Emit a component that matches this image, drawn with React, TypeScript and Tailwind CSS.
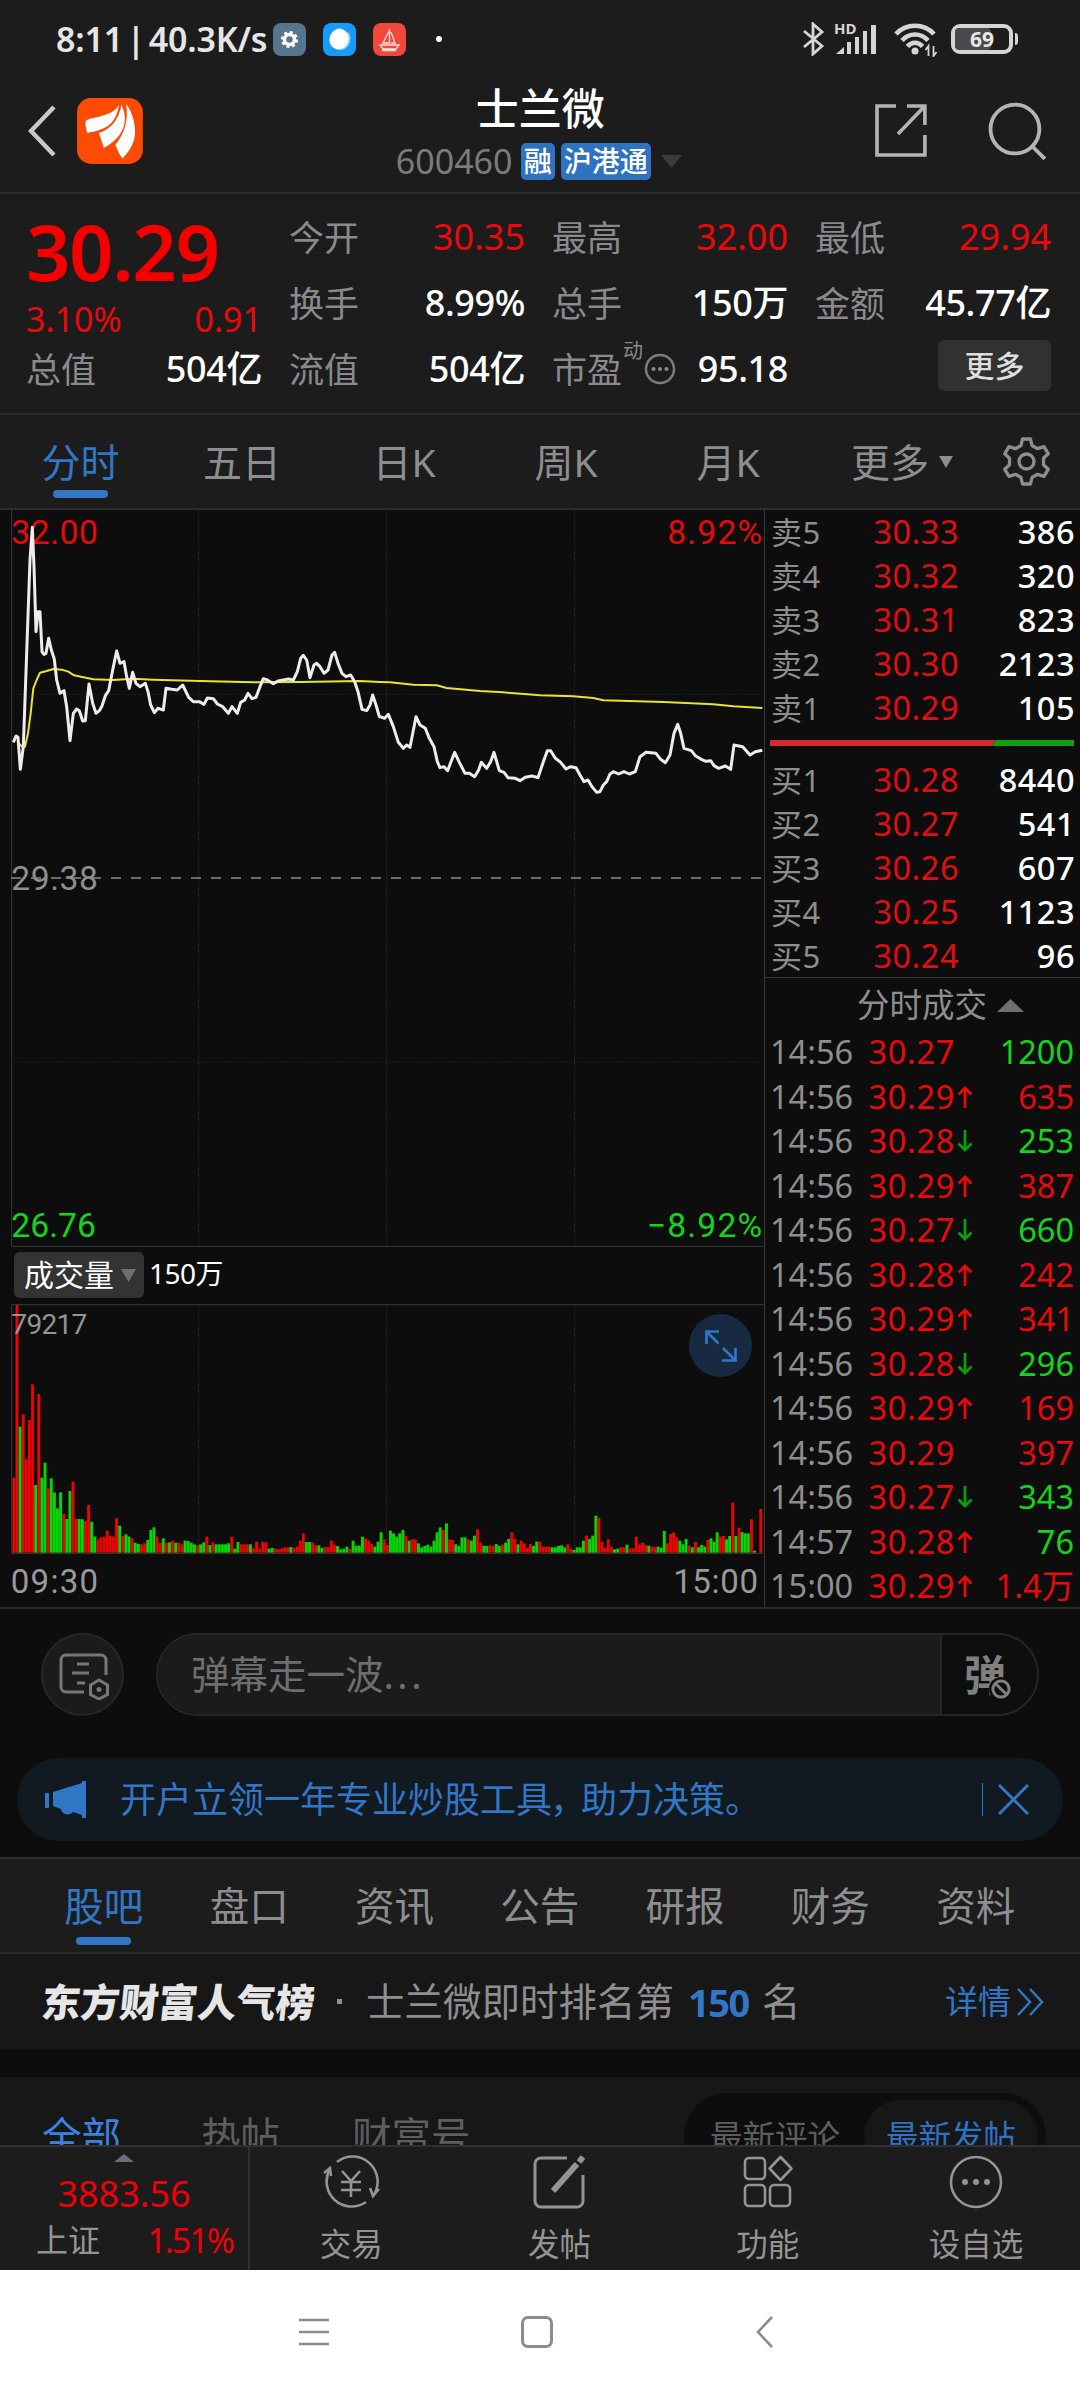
import type { ReactNode } from 'react';

type Side = 'up' | 'down' | null;

const sells = [
  ['卖5', '30.33', '386'],
  ['卖4', '30.32', '320'],
  ['卖3', '30.31', '823'],
  ['卖2', '30.30', '2123'],
  ['卖1', '30.29', '105'],
];

const buys = [
  ['买1', '30.28', '8440'],
  ['买2', '30.27', '541'],
  ['买3', '30.26', '607'],
  ['买4', '30.25', '1123'],
  ['买5', '30.24', '96'],
];

const trades: { time: string; price: string; dir: Side; vol: string; buy: boolean }[] = [
  { time: '14:56', price: '30.27', dir: null, vol: '1200', buy: false },
  { time: '14:56', price: '30.29', dir: 'up', vol: '635', buy: true },
  { time: '14:56', price: '30.28', dir: 'down', vol: '253', buy: false },
  { time: '14:56', price: '30.29', dir: 'up', vol: '387', buy: true },
  { time: '14:56', price: '30.27', dir: 'down', vol: '660', buy: false },
  { time: '14:56', price: '30.28', dir: 'up', vol: '242', buy: true },
  { time: '14:56', price: '30.29', dir: 'up', vol: '341', buy: true },
  { time: '14:56', price: '30.28', dir: 'down', vol: '296', buy: false },
  { time: '14:56', price: '30.29', dir: 'up', vol: '169', buy: true },
  { time: '14:56', price: '30.29', dir: null, vol: '397', buy: true },
  { time: '14:56', price: '30.27', dir: 'down', vol: '343', buy: false },
  { time: '14:57', price: '30.28', dir: 'up', vol: '76', buy: false },
  { time: '15:00', price: '30.29', dir: 'up', vol: '1.4万', buy: true },
];

// one entry per minute, r = up, g = down
const volumes = (
  'r225 r743 g378 r415 r280 r398 r505 g203 r476 g225 g270 r193 g223 g181 g133 g181 r116 g101 g185 r213 ' +
  'r101 g101 g100 r95 r143 g93 g48 r40 r46 r48 r66 r50 r48 r103 g81 r50 g55 g48 r43 g30 ' +
  'g26 r25 r28 g38 g68 g76 r48 r30 g43 r30 g31 r36 g30 r30 r25 g36 g35 g30 g25 r22 ' +
  'g25 g31 r48 g23 r31 g25 g25 g25 g25 g28 r48 g12 g32 r25 r25 r25 g25 r13 r33 r12 ' +
  'r33 r31 g12 g14 r12 r10 r12 r16 r16 g17 r15 r18 r36 r58 g32 g32 r30 r22 g22 g14 ' +
  'r17 r17 r36 r24 g20 g10 g12 g18 r12 g36 g21 g21 g48 r43 r36 r26 g18 g33 g61 r40 ' +
  'r23 g66 g58 g48 g58 g68 r50 g36 r40 r40 g28 g16 g20 g24 g18 g36 g61 g76 r68 g88 ' +
  'r40 r38 g25 g20 g46 g46 r40 g36 g51 r70 r30 g21 g20 r22 r20 g26 g20 r24 g30 g41 ' +
  'r61 r41 g25 r36 r28 r14 r26 g20 g33 r33 r18 r18 r18 g16 g16 g20 g22 g16 r25 r12 ' +
  'g8 g16 g16 g36 r51 g41 g51 g111 r105 r33 r14 r40 r18 g10 g12 r16 r16 g24 r13 r13 ' +
  'r48 r24 r30 r23 g21 r18 r16 g18 g15 g65 r28 r56 r61 r46 g36 g25 g41 r22 g16 r32 ' +
  'g16 g23 g18 r38 g43 g33 g61 r48 r50 g40 g50 r150 g50 r75 g62 g58 g58 r100 g6 r0 r131'
).split(' ');

const priceMorning =
  '40,727 48,708 54,712 61,808 70,740 80,460 90,180 97,82 102,200 108,395 114,335 120,335 126,455 132,463 138,460 146,415 154,450 163,478 170,540 180,580 192,572 200,620 210,722 220,640 230,627 238,632 248,663 256,662 267,552 278,610 288,640 298,632 306,618 316,587 326,572 338,510 350,453 360,490 372,485 380,530 388,565 398,517 408,550 420,560 436,550 444,575 452,615 463,638 474,625 490,630 498,565 515,568 532,570 548,555 566,592 580,605 598,605 612,613 622,594 640,596 652,612 668,620 685,640 696,620 712,640 722,607 734,600 744,580 756,596 768,592 780,560 790,536 802,540 820,551 834,543 850,540 866,537 880,540 892,515 902,475 910,466 920,480 930,533 942,495 950,490 960,500 972,520 984,510 996,465 1004,457 1014,490 1026,520 1038,530 1052,525 1064,545 1074,575 1086,628 1100,632 1110,615 1118,585 1128,615 1138,650 1140,650';
const priceAfternoon =
  '0,650 14,655 25,643 40,680 55,727 70,745 80,735 90,742 108,650 120,675 136,685 148,715 162,740 172,785 180,803 192,800 203,812 213,785 224,757 238,787 255,820 268,820 284,830 296,810 304,787 320,805 332,785 342,757 358,812 372,817 384,833 406,835 420,842 436,832 456,828 474,833 490,785 502,752 512,752 526,775 540,785 558,807 572,800 588,803 600,825 612,845 624,840 636,860 650,877 660,875 670,855 680,845 690,822 700,815 716,822 732,815 748,822 766,815 780,770 798,757 828,760 842,778 856,788 870,765 882,700 893,673 902,700 912,745 934,752 946,767 964,778 978,784 992,782 1002,797 1016,805 1036,798 1052,808 1062,735 1088,740 1110,765 1126,755 1147,751';
const avgLine =
  '55,728 66,740 75,740 84,700 92,640 100,565 110,540 120,518 140,513 160,507 185,509 205,515 222,526 250,532 280,538 340,540 400,536 460,539 600,543 760,547 900,546 1080,543 1140,546 1170,547 1240,554 1310,556 1340,564 1440,573 1510,577 1620,586 1720,589 1780,594 1810,601 1990,606 2140,613 2200,619 2287,624';

function StatusBar() {
  return (
    <div className="flex h-[78px] items-center pl-[56px] pr-[62px] text-[#e6e6e6]">
      <span className="w-[217px] whitespace-nowrap text-[34px] font-semibold tracking-[-0.2px] [word-spacing:-5px]">8:11 | 40.3K/s</span>
      <div className="flex items-center gap-[17px]">
        <svg className="size-[33px]" viewBox="0 0 33 33">
          <rect width="33" height="33" rx="8" fill="#56768f" />
          <circle cx="16.500" cy="16.500" r="5" fill="none" stroke="#fff" strokeWidth="3.500" />
          <circle cx="16.500" cy="16.500" r="7.300" fill="none" stroke="#fff" strokeWidth="2.500" strokeDasharray="3 2.730" />
        </svg>
        <svg className="size-[33px]" viewBox="0 0 33 33">
          <rect width="33" height="33" rx="8" fill="#169bfb" />
          <path d="M12 25c4 4 13 2 15-6 1-5 0-8-2-10z" fill="#8fd0ff" />
          <ellipse cx="16" cy="16" rx="9.500" ry="10.500" transform="rotate(20 16 16)" fill="#fff" />
        </svg>
        <svg className="size-[33px]" viewBox="0 0 33 33">
          <rect width="33" height="33" rx="8" fill="#f0483c" />
          <path d="M16.500 6v15M16 8l-6 12h6M18 9l4 11h-4M7 22h19l-3 4H10zM9 27.500h14" fill="none" stroke="#ffe2d8" strokeWidth="1.300" />
        </svg>
      </div>
      <span className="ml-[30px] size-[6px] rounded-full bg-white" />
      <div className="ml-auto flex items-center">
        <svg className="h-[34px] w-[24px]" viewBox="0 0 24 34" fill="none" stroke="#d5d5d5" strokeWidth="2.800">
          <path d="M3 9l18 15-9 8V2l9 8L3 25" />
        </svg>
        <svg className="ml-[10px] h-[34px] w-[43px] overflow-visible" viewBox="0 0 43 34">
          <text x="-1" y="11.500" fontSize="15" fontWeight="700" fill="#d5d5d5">HD</text>
          <g fill="#d5d5d5">
            <path d="M1 32l8-7v7z" />
            <rect x="12" y="20" width="4" height="12" />
            <rect x="20" y="15" width="4" height="17" />
            <rect x="28" y="9" width="4" height="23" />
            <rect x="36" y="3" width="5" height="29" />
          </g>
        </svg>
        <svg className="ml-[16px] h-[36px] w-[44px]" viewBox="0 0 44 36" fill="none" stroke="#d5d5d5" strokeWidth="4.600">
          <path d="M2 13C12 2 30 2 40 13" />
          <path d="M8 19.500c7-8 19-8 26 0" />
          <path d="M13.500 25.500c4-5 11-5 15 0" />
          <circle cx="21" cy="30" r="3.500" fill="#d5d5d5" stroke="none" />
          <path d="M34.500 35V25l-3 4M39.500 25v10l3-4" strokeWidth="1.800" />
        </svg>
        <div className="ml-[13px] flex items-center">
          <div className="relative flex h-[30px] w-[62px] items-center justify-center rounded-[9px] border-[4px] border-[#d5d5d5]">
            <div className="absolute left-0 top-0 h-full w-[36px] rounded-[4px] bg-[#4a4a4a]" />
            <span className="relative text-[21px] font-bold leading-none">69</span>
          </div>
          <div className="ml-[2px] h-[12px] w-[3px] rounded-r bg-[#d5d5d5]" />
        </div>
      </div>
    </div>
  );
}

function TitleBar() {
  return (
    <div className="flex h-[114px] items-start pl-[28px] pr-[33px]">
      <svg className="mt-[27px] h-[52px] w-[28px]" viewBox="0 0 28 52" fill="none" stroke="#c9c9c9" strokeWidth="4.500">
        <path d="M26 2L3 26l23 24" />
      </svg>
      <svg className="ml-[21px] mt-[20px] size-[66px]" viewBox="0 0 66 66">
        <rect width="66" height="66" rx="14" fill="#fd4a05" />
        <g fill="#fff">
          <path d="M42 7C36 17 24 18 12 21c-3 1-4 3-3.500 6l1.500 8c10-2 20-4 26-12 3-4 5-9 6-16z" />
          <path d="M44.500 7C42 22 34 31 22 35l5 15c10-6 17-12 20-22 2-7 1-14-2.500-21z" />
          <path d="M49 6c3 15-1 29-10.500 41 2 5 4 10 7 13.500C56 50 59 40 58 30 57 20 54 12 49 6z" />
        </g>
      </svg>
      <div className="ml-[253px] flex w-[290px] flex-col">
        <div className="flex h-[60px] items-center pl-[80px] text-[43px] font-medium text-white">士兰微</div>
        <div className="flex h-[46px] items-center">
          <span className="w-[125px] text-[34px] text-[#7b7b7b]">600460</span>
          <span className="flex h-[37px] w-[34px] items-center justify-center rounded-[5px] bg-[#2f72c2] text-[28px] font-medium text-white">融</span>
          <span className="ml-[6px] flex h-[37px] w-[90px] items-center justify-center rounded-[5px] bg-[#2f72c2] text-[28px] font-medium text-white">沪港通</span>
          <svg className="ml-[10px] h-[13px] w-[21px]" viewBox="0 0 21 13"><path d="M0 0h21L10.500 13z" fill="#3b3b3b" /></svg>
        </div>
      </div>
      <svg className="ml-[189px] mt-[26px] size-[54px]" viewBox="0 0 54 54" fill="none" stroke="#b4b4b4" strokeWidth="3.600">
        <path d="M22 2H3v49h48V31M33 2h18v19M51 2L24 30" />
      </svg>
      <svg className="ml-[60px] mt-[24px] size-[59px]" viewBox="0 0 59 59" fill="none" stroke="#b4b4b4" strokeWidth="3.800">
        <circle cx="27" cy="27" r="24.500" />
        <path d="M44.500 44.500L57 57" />
      </svg>
    </div>
  );
}

function Stat({ label, value, red }: { label: ReactNode; value: string; red?: boolean }) {
  return (
    <div className="flex h-[66px] w-[236px] items-center justify-between whitespace-nowrap">
      <span className="flex items-center text-[35px] text-[#8a8a8e]">{label}</span>
      {red ? (
        <span className="text-[36px] text-[#e8090d]">{value}</span>
      ) : (
        <span className="text-[36px] font-medium tracking-[-0.4px] text-white">{value}</span>
      )}
    </div>
  );
}

function Summary() {
  return (
    <div className="flex h-[221px] gap-[27px] border-t-2 border-[#2c2c2c] pl-[26px] pt-[10px]">
      <div className="w-[236px]">
        <div className="h-[94px] whitespace-nowrap text-[78px] font-semibold leading-[94px] tracking-[-1.500px] text-[#f40000]">30.29</div>
        <div className="flex h-[38px] items-center justify-between pt-[4px] text-[34px] text-[#e8090d]">
          <span>3.10%</span>
          <span>0.91</span>
        </div>
        <Stat label="总值" value="504亿" />
      </div>
      <div>
        <Stat label="今开" value="30.35" red />
        <Stat label="换手" value="8.99%" />
        <Stat label="流值" value="504亿" />
      </div>
      <div>
        <Stat label="最高" value="32.00" red />
        <Stat label="总手" value="150万" />
        <Stat
          label={
            <>
              市盈
              <span className="ml-px -mt-[36px] text-[20px]">动</span>
              <svg className="ml-[1px] size-[32px]" viewBox="0 0 32 32">
                <circle cx="16" cy="16" r="14" fill="none" stroke="#7c7c7c" strokeWidth="2.500" />
                <g fill="#8a8a8e"><circle cx="9.500" cy="16" r="2" /><circle cx="16" cy="16" r="2" /><circle cx="22.500" cy="16" r="2" /></g>
              </svg>
            </>
          }
          value="95.18"
        />
      </div>
      <div>
        <Stat label="最低" value="29.94" red />
        <Stat label="金额" value="45.77亿" />
        <button className="ml-auto mt-[4px] flex h-[51px] w-[113px] items-center justify-center rounded-[6px] bg-[#313131] text-[30px] font-medium text-[#dedede]">更多</button>
      </div>
    </div>
  );
}

function PeriodTabs() {
  return (
    <div className="flex h-[95px] items-center border-t-2 border-[#2c2c2c] text-[39px] text-[#8e8e90]">
      <div className="relative flex h-full w-[161px] items-center justify-center text-[#3276c6]">
        分时
        <span className="absolute bottom-[10px] h-[8px] w-[55px] rounded-full bg-[#3276c6]" />
      </div>
      {['五日', '日K', '周K', '月K'].map((t) => (
        <div key={t} className="flex w-[162px] items-center justify-center">{t}</div>
      ))}
      <div className="ml-[42px] flex w-[151px] items-center">
        更多
        <svg className="ml-[10px] h-[12px] w-[14px]" viewBox="0 0 14 12"><path d="M0 0h14L7 12z" fill="#8e8e90" /></svg>
      </div>
      <svg className="size-[49px]" viewBox="0 0 49 49" fill="none" stroke="#8e8e90" strokeWidth="3.300" strokeLinejoin="round">
        <path d="M20.500 2h8l1.500 6.500 5.500 3.200 6.500-2 4.200 7-4.700 4.600v6.400l4.700 4.600-4.200 7-6.500-2-5.500 3.200L28.500 47h-8L19 40.500l-5.500-3.200-6.500 2-4.200-7 4.700-4.600v-6.400l-4.700-4.600 4.200-7 6.500 2L19 8.500z" />
        <circle cx="24.500" cy="24.500" r="7.500" />
      </svg>
    </div>
  );
}

function Chart() {
  return (
    <div className="relative h-[1100px] w-[764px] shrink-0">
      {/* three units per pixel */}
      <svg className="block h-[1100px] w-[764px]" viewBox="0 24 2292 3300" fill="none">
        <g stroke="#3a3a3a" strokeWidth="3">
          <path d="M35 24V2239H2290M35 3159V2414H2290" />
          <path d="M35 3160H2290" />
        </g>
        <g stroke="#333" strokeWidth="3" strokeDasharray="3 4">
          <path d="M596 30V2239M1160 30V2239M1724 30V2239M596 2414V3158M1160 2414V3158M1724 2414V3158" />
          <path d="M35 583H2290M35 1686H2290" stroke="#262626" />
        </g>
        <path d="M33 1134H2290" stroke="#8c8c8c" strokeWidth="5" strokeDasharray="30 30" />
        <g fontSize="101" fontFamily="Roboto, sans-serif">
          <text x="34" y="131" letterSpacing="1.500" fill="#e8090d">32.00</text>
          <text x="34" y="1171" letterSpacing="1.500" fill="#8e8e8e">29.38</text>
          <text x="34" y="2211" fill="#14d41c">26.76</text>
          <text x="2290" y="131" textAnchor="end" letterSpacing="3.500" fill="#e8090d">8.92%</text>
          <text x="2290" y="2211" textAnchor="end" letterSpacing="3.500" fill="#14d41c">−8.92%</text>
        </g>
        <g>
          {volumes.map((v, i) => {
            const h = Number(v.slice(1));
            return <rect key={i} x={37.3 + i * 9.336} y={3158 - h} width="8.800" height={h} fill={v[0] === 'r' ? '#e80505' : '#05d605'} />;
          })}
        </g>
        <text x="34" y="2501" fontSize="84" letterSpacing="-2" fontFamily="Roboto, sans-serif" fill="#949494">79217</text>
        <g fontSize="99" fontFamily="Roboto, sans-serif" fill="#9a9a9a">
          <text x="32" y="3279" letterSpacing="4">09:30</text>
          <text x="2276" y="3279" textAnchor="end" letterSpacing="2">15:00</text>
        </g>
        <polyline points={avgLine} stroke="#e9e42c" strokeWidth="6" strokeLinejoin="round" />
        <g stroke="#ededed" strokeWidth="9" strokeLinejoin="round">
          <polyline points={priceMorning} />
          <polyline points={priceAfternoon} transform="translate(1140 0)" />
        </g>
      </svg>
      <div className="absolute left-[14px] top-[744px] flex items-center">
        <span className="flex h-[46px] w-[130px] items-center rounded-[6px] bg-[#333] pl-[10px] text-[30px] text-white">
          成交量
          <svg className="ml-[7px] h-[13px] w-[15px]" viewBox="0 0 15 13"><path d="M0 0h15L7.500 13z" fill="#707070" /></svg>
        </span>
        <span className="-mt-[4px] ml-[5px] text-[28px] tracking-[-0.5px] text-white">150万</span>
      </div>
      <div className="absolute left-[689px] top-[806px] flex size-[63px] items-center justify-center rounded-full bg-[#172a42]">
        <svg className="size-[32px]" viewBox="0 0 32 32" fill="none" stroke="#3276c6" strokeWidth="2.700">
          <path d="M1.500 14V1.500H14M1.500 1.500L13.500 13.500M30.500 18v12.500H17M30.500 30.500L18 18" />
        </svg>
      </div>
    </div>
  );
}

function BookRow({ row }: { row: string[] }) {
  return (
    <div className="flex h-[44px] items-center pl-[6px] pr-[6px]">
      <span className="w-[80px] text-[31px] tracking-[0.5px] text-[#8e8e8e]">{row[0]}</span>
      <span className="w-[108px] text-right text-[32.500px] tracking-[0.5px] text-[#e00d12]">{row[1]}</span>
      <span className="flex-1 text-right text-[32.500px] font-medium tracking-[0.5px] text-white">{row[2]}</span>
    </div>
  );
}

function Arrow({ dir }: { dir: Side }) {
  return (
    <svg className="ml-[2px] h-[22px] w-[16px]" viewBox="0 0 16 22" fill="none" strokeWidth="2.800">
      {dir === 'up' && <path d="M8 22V2M1.500 8.500L8 2l6.500 6.500" stroke="#e8090d" />}
      {dir === 'down' && <path d="M8 0v20M1.500 13.500L8 20l6.500-6.500" stroke="#0b9c14" />}
    </svg>
  );
}

function OrderBook() {
  return (
    <div className="w-[317px] shrink-0 border-l border-[#3a3a3a]">
      <div className="pt-[2px]">{sells.map((r) => <BookRow key={r[0]} row={r} />)}</div>
      <svg className="ml-[5px] mt-[10px] block h-[6px] w-[304px]" viewBox="0 0 304 6">
        <path d="M0 0h226l-4 6H0z" fill="#d02c31" />
        <path d="M226 0h78v6h-82z" fill="#10a010" />
      </svg>
      <div className="mt-[12px]">{buys.map((r) => <BookRow key={r[0]} row={r} />)}</div>
      <div className="-mt-px flex h-[53px] items-center border-t border-[#3a3a3a] pl-[92px] pt-[2px] text-[32.500px] text-[#8e8e8e]">
        分时成交
        <svg className="ml-[10px] h-[13px] w-[27px]" viewBox="0 0 27 13"><path d="M0 13h27L13.500 0z" fill="#6f6f6f" /></svg>
      </div>
      {trades.map((t, i) => (
        <div key={i} className="flex h-[44.500px] items-center pl-[5px] pr-[7px]">
          <span className="w-[82px] text-[32.500px] text-[#8e8e8e]">{t.time}</span>
          <span className="w-[103px] text-right text-[32.500px] tracking-[0.7px] text-[#e8090d]">{t.price}</span>
          <Arrow dir={t.dir} />
          <span className={t.buy ? 'flex-1 text-right text-[32.500px] text-[#e8090d]' : 'flex-1 text-right text-[32.500px] text-[#14d41c]'}>{t.vol}</span>
        </div>
      ))}
    </div>
  );
}

function Danmaku() {
  return (
    <div className="mt-[24px] flex pl-[41px]">
      <div className="flex size-[83px] items-center justify-center rounded-full border-2 border-[#262626] bg-[#1b1b1b]">
        <svg className="ml-[3px] mt-[3px] h-[47px] w-[51px]" viewBox="0 0 51 47" fill="none" stroke="#777" strokeWidth="3">
          <path d="M47 22V7a5 5 0 0 0-5-5H7a5 5 0 0 0-5 5v27a5 5 0 0 0 5 5h18" />
          <path d="M18 11h12M13 20h17M18 30h8" />
          <path d="M40 27l8.500 5v9.500L40 46l-8.500-4.500V32z" />
          <circle cx="40" cy="36.500" r="2.500" fill="#777" stroke="none" />
        </svg>
      </div>
      <div className="ml-[32px] flex h-[83px] w-[883px] items-center overflow-hidden rounded-full border-2 border-[#262626] bg-[#0e0e0e]">
        <div className="flex h-full w-[784px] items-center border-r-2 border-[#262626] bg-[#1b1b1b] pl-[33px] text-[38.500px] text-[#6e6e6e]">
          弹幕走一波<span className="tracking-[3.500px]">...</span>
        </div>
        <div className="relative ml-[22px] text-[42px] font-bold text-[#808080]">
          弹
          <svg className="absolute -bottom-[5px] right-[-7px] size-[24px]" viewBox="0 0 24 24">
            <circle cx="12" cy="12" r="12" fill="#0e0e0e" />
            <path d="M12 4a8 8 0 1 0 .01 0M6.500 6.500l11 11" fill="none" stroke="#808080" strokeWidth="3" />
          </svg>
        </div>
      </div>
    </div>
  );
}

function Notice() {
  return (
    <div className="ml-[17px] mt-[42px] flex h-[83px] w-[1046px] items-center rounded-full bg-[#121a21] text-[#3276c6]">
      <svg className="ml-[28px] h-[37px] w-[42px]" viewBox="0 0 42 37" fill="#3276c6">
        <rect y="12" width="4" height="15" rx="1" />
        <path d="M8 11L37 2V0h4v37h-4v-3l-9-3c-3 4-11 3-12-3l-8-3z" />
      </svg>
      <div className="ml-[33px] whitespace-nowrap pt-px text-[36px]">
        开户立领一年专业炒股工具<span className="-ml-[2px] tracking-[-5px]">，</span>助力决策。
      </div>
      <div className="ml-auto h-[33px] w-px bg-[#3276c6]" />
      <svg className="ml-[15px] mr-[34px] size-[31px]" viewBox="0 0 31 31" stroke="#3276c6" strokeWidth="3">
        <path d="M1 1l29 29M30 1L1 30" />
      </svg>
    </div>
  );
}

function InfoTabs() {
  return (
    <div className="mt-[16px] flex h-[95px] items-center border-t-2 border-[#2c2c2c] bg-[#1c1c1c] pl-[31px] text-[39.500px] text-[#8e8e90]">
      <div className="relative flex h-full w-[145.500px] items-center justify-center pt-[3px] text-[#3276c6]">
        股吧
        <span className="absolute bottom-[7px] h-[8px] w-[55px] rounded-full bg-[#3276c6]" />
      </div>
      {['盘口', '资讯', '公告', '研报', '财务', '资料'].map((t) => (
        <div key={t} className="flex w-[145.300px] items-center justify-center pt-[3px]">{t}</div>
      ))}
    </div>
  );
}

function RankRow() {
  return (
    <div className="flex h-[97px] items-center whitespace-nowrap border-t-2 border-[#2c2c2c] bg-[#171717] pl-[42px] text-[38.500px] text-[#8e8e90]">
      <span className="w-[295px] -skew-x-6 text-[39px] font-black text-[#e6e6e6]">东方财富人气榜</span>
      <span className="size-[5px] bg-[#8e8e90]" />
      <span className="ml-[24px] w-[322px]">士兰微即时排名第</span>
      <span className="w-[74px] text-[38px] font-bold tracking-[-1.500px] text-[#3276c6]">150</span>
      <span>名</span>
      <span className="ml-auto text-[33px] text-[#3276c6]">详情</span>
      <svg className="ml-[6px] mr-[36px] h-[28px] w-[27px]" viewBox="0 0 27 28" fill="none" stroke="#3276c6" strokeWidth="2.500">
        <path d="M1 1l12 13L1 27M13 1l12 13-12 13" />
      </svg>
    </div>
  );
}

function PostTabs() {
  return (
    <div className="mt-[28px] flex h-[68px] items-start overflow-hidden bg-[#171717] pl-[42px] text-[39.500px] leading-[44px] text-[#5e5e5e]">
      <span className="mt-[37px] w-[159px] text-[#3b82e0]">全部</span>
      <span className="mt-[37px] w-[151px]">热帖</span>
      <span className="mt-[37px]">财富号</span>
      <div className="ml-auto mr-[34px] mt-[16px] flex h-[86px] w-[362px] rounded-full bg-[#0d0d0d] pt-[7px] text-[32.500px]">
        <span className="w-[180px] pl-[26px] pt-[15px]">最新评论</span>
        <span className="flex h-[72px] w-[174px] justify-center rounded-full bg-[#171717] pt-[15px] text-[#2f72c2]">最新发帖</span>
      </div>
    </div>
  );
}

function BarItem({ label, children }: { label: string; children: ReactNode }) {
  return (
    <div className="flex w-[208.300px] flex-col items-center pt-[8px] text-[#949494]">
      <svg className="h-[54px] w-[60px]" viewBox="0 0 60 54" fill="none" stroke="#949494" strokeWidth="2.600">{children}</svg>
      <span className="mt-[12px] text-[31.500px] leading-[46px]">{label}</span>
    </div>
  );
}

function BottomBar() {
  return (
    <div className="flex h-[125px] border-t-2 border-[#303030] bg-[#1c1c1c]">
      <div className="flex w-[250px] shrink-0 flex-col items-center border-r-2 border-[#303030] pt-[7px]">
        <svg className="h-[8px] w-[20px]" viewBox="0 0 20 8"><path d="M0 8h20L10 0z" fill="#6f6f76" /></svg>
        <span className="mt-[10px] text-[36px] leading-[44px] text-[#ef0008]">3883.56</span>
        <div className="flex w-full justify-between pl-[36px] pr-[15px] text-[32px] leading-[48px] text-[#949494]">
          <span>上证</span>
          <span className="text-[34px] tracking-[-2px] text-[#ef0008]">1.51%</span>
        </div>
      </div>
      <div className="-ml-[3px] flex">
        <BarItem label="交易">
          <path d="M16 7a25 25 0 0 1 36 34M45 47A25 25 0 0 1 9 14" />
          <path d="M3 18l6-5 1 8M58 34l-6 7-3-8" />
          <path d="M21 16l9 10 9-10M30 26v16M20 27h20M20 35h20" />
        </BarItem>
        <BarItem label="发帖">
          <path d="M38 3H12a6 6 0 0 0-6 6v37a6 6 0 0 0 6 6h36a6 6 0 0 0 6-6V20" strokeWidth="3" />
          <path d="M48 9L24 36" strokeWidth="6" />
          <path d="M50 7l4-5" strokeWidth="6" />
        </BarItem>
        <BarItem label="功能">
          <rect x="7" y="3" width="20" height="21" rx="4" />
          <rect x="7" y="30" width="20" height="21" rx="4" />
          <rect x="32" y="30" width="20" height="21" rx="4" />
          <path d="M42.500 2l11 11.500-11 11.500-11-11.500z" strokeLinejoin="round" />
        </BarItem>
        <BarItem label="设自选">
          <circle cx="30" cy="27" r="25" />
          <g fill="#949494" stroke="none"><circle cx="19" cy="27" r="3" /><circle cx="30" cy="27" r="3" /><circle cx="41" cy="27" r="3" /></g>
        </BarItem>
      </div>
    </div>
  );
}

function SystemNav() {
  return (
    <div className="flex h-[130px] items-center bg-white pb-[7px] pl-[299px]">
      <svg className="h-[28px] w-[30px]" viewBox="0 0 30 28" stroke="#8c8c8c" strokeWidth="2.600">
        <path d="M0 2h30M0 14h30M0 26h30" />
      </svg>
      <div className="ml-[192px] size-[32px] rounded-[7px] border-[3px] border-[#8c8c8c]" />
      <svg className="ml-[203px] h-[32px] w-[18px]" viewBox="0 0 18 32" fill="none" stroke="#8c8c8c" strokeWidth="2.600">
        <path d="M16 1L2 16l14 15" />
      </svg>
    </div>
  );
}

export default function App() {
  return (
    <div className="h-[2400px] w-[1080px] overflow-hidden bg-[#0d0d0d] font-['Noto_Sans','Noto_Sans_CJK_SC',sans-serif] leading-none">
      <div className="bg-[#1c1c1c]">
        <StatusBar />
        <TitleBar />
        <Summary />
        <PeriodTabs />
      </div>
      <div className="flex h-[1101px] border-b-2 border-[#2c2c2c] shadow-[inset_0_2px_0_#2c2c2c]">
        <Chart />
        <OrderBook />
      </div>
      <Danmaku />
      <Notice />
      <InfoTabs />
      <RankRow />
      <PostTabs />
      <BottomBar />
      <SystemNav />
    </div>
  );
}
